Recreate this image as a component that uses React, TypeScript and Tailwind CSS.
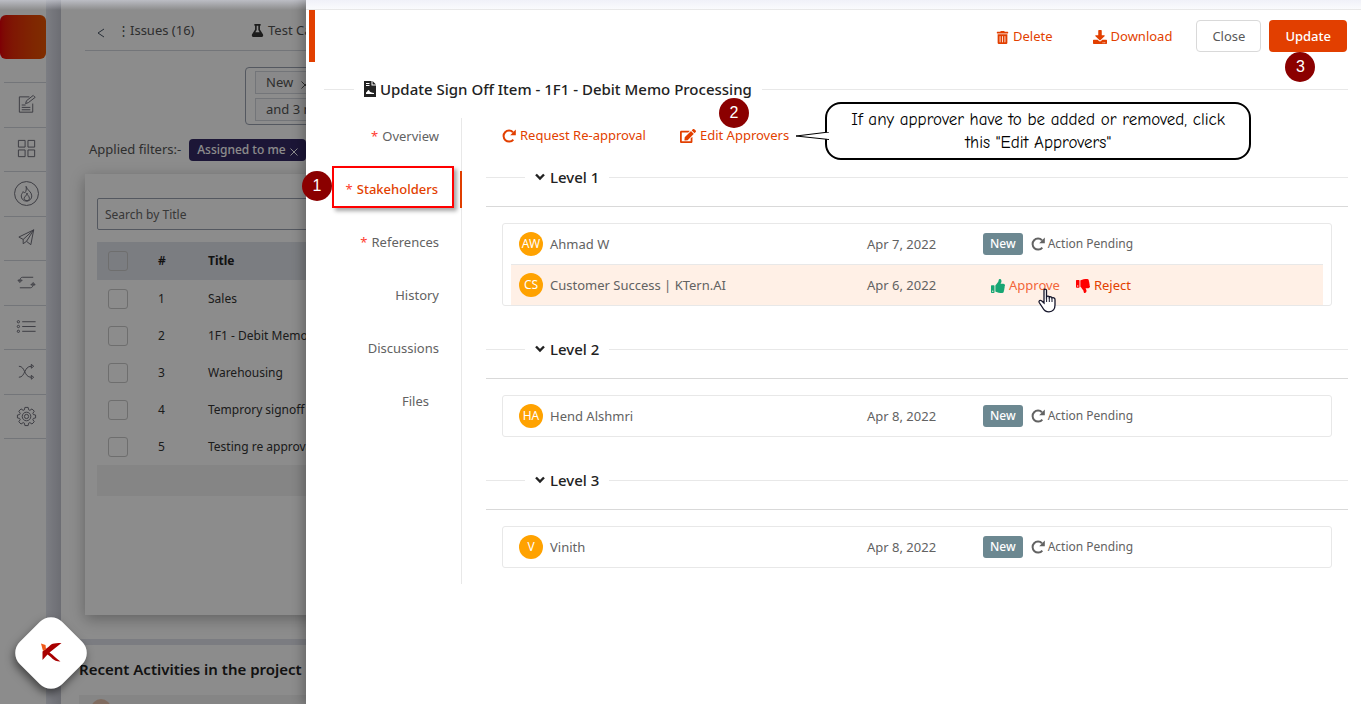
import React, { useState } from "react";
import {
  FaDownload,
  FaEdit,
  FaFlask,
  FaThumbsDown,
  FaThumbsUp,
  FaTrashAlt,
} from "react-icons/fa";

type Approver = {
  initials: string;
  name: string;
  date: string;
  canAct?: boolean;
};

type Level = {
  title: string;
  approvers: Approver[];
};

const levels: Level[] = [
  {
    title: "Level 1",
    approvers: [
      { initials: "AW", name: "Ahmad W", date: "Apr 7, 2022" },
      { initials: "CS", name: "Customer Success | KTern.AI", date: "Apr 6, 2022", canAct: true },
    ],
  },
  { title: "Level 2", approvers: [{ initials: "HA", name: "Hend Alshmri", date: "Apr 8, 2022" }] },
  { title: "Level 3", approvers: [{ initials: "V", name: "Vinith", date: "Apr 8, 2022" }] },
];

const tabs = [
  { label: "Overview", required: true },
  { label: "Stakeholders", required: true },
  { label: "References", required: true },
  { label: "History", required: false },
  { label: "Discussions", required: false },
  { label: "Files", required: false },
];

const signOffItems = [
  "Sales",
  "1F1 - Debit Memo Processing",
  "Warehousing",
  "Temprory signoff item",
  "Testing re approval flow",
];

const navItems = [
  {
    label: "Notes",
    icon: (
      <>
        <path d="M14 3H3.500v16h14V10" />
        <path d="M6 14h9M6 16.500h9M6 11.500h4" />
        <path d="m10 10 1-3 7-5.500 2 2-7 5.500z" />
      </>
    ),
  },
  {
    label: "Boards",
    icon: <path d="M2.500 2.500h7v7h-7zM12.500 2.500h7v7h-7zM2.500 12.500h7v7h-7zM12.500 12.500h7v7h-7z" />,
  },
  {
    label: "Activity",
    icon: (
      <>
        <circle cx="11" cy="11" r="12.500" />
        <path d="M10.500 3.500c1 4 6 5.500 6 10 0 3-2 5-5 5.500-4 0-6-2.500-6-5.500 0-2 1.500-3 2-4.500l1.500 1.500c2-2 2-4.500 1.500-7z" />
        <path d="M11.500 10.500c0 2.500 2.500 3 2.500 5.500 0 1.500-1 2.500-2.500 2.500S8.500 17.500 8.500 16c0-2 3-2.500 3-5.500z" />
      </>
    ),
  },
  {
    label: "Send",
    icon: <path d="M18.500 3 3 10.500l4.500 2.500L18.500 3l-3 15.500-4.500-3.500-3.500 2.500v-4.500M18.500 3 11 15" />,
  },
  {
    label: "Repeat",
    icon: (
      <>
        <path d="M18 5.500H7c-2 0-3 1.500-3 4.500M4 16.500h11c2 0 3-1.500 3-4.500" />
        <path d="m2 8.500 2 2.500 2.500-2.500zM15.500 13.500l2.500-2.500 2 2.500z" />
      </>
    ),
  },
  {
    label: "List",
    icon: (
      <>
        <path d="M6.500 6h14M6.500 11h14M6.500 16h14" />
        <circle cx="2.500" cy="6" r="1.200" />
        <circle cx="2.500" cy="11" r="1.200" />
        <circle cx="2.500" cy="16" r="1.200" />
      </>
    ),
  },
  {
    label: "Shuffle",
    icon: (
      <>
        <path d="M3 5.500c7 0 5 11.500 13 11.500M3 17c7 0 5-11.500 13-11.500" />
        <path d="m16 3.500 2.500 2-2.500 2zM16 15l2.500 2-2.500 2z" />
      </>
    ),
  },
  {
    label: "Settings",
    icon: (
      <>
        <path d="M9.300 2.500h3.400l.5 2.500 1.300.6 2.200-1.500 2.400 2.400-1.500 2.200.6 1.300 2.300.5v3l-2.300.5-.6 1.300 1.500 2.200-2.400 2.400-2.200-1.500-1.300.6-.5 2.500H9.300l-.5-2.500-1.300-.6-2.200 1.500-2.400-2.400 1.500-2.200-.6-1.300-2.300-.5v-3l2.300-.5.6-1.300-1.500-2.200 2.400-2.400 2.200 1.500 1.300-.6z" />
        <circle cx="11" cy="12" r="4.500" />
        <circle cx="11" cy="12" r="2.200" />
      </>
    ),
  },
];

const Sidebar: React.FC = () => (
  <nav className="w-[46px] shrink-0 bg-white pt-[15px]">
    <div className="h-11 rounded-md bg-linear-to-r from-[#e6000a] to-[#e85400]" />
    <ul className="mt-[23px] ml-1 flex h-[357px] flex-col border-t border-gray-300">
      {navItems.map((item) => (
        <li key={item.label} className="flex flex-1 border-b border-gray-300">
          <a href="#" aria-label={item.label} className="flex flex-1 items-center pl-3">
            <svg
              viewBox="0 0 23 23"
              className="size-[22px] overflow-visible fill-none stroke-[#6a6a76]"
            >
              {item.icon}
            </svg>
          </a>
        </li>
      ))}
    </ul>
  </nav>
);

const CloseMark: React.FC = () => (
  <svg viewBox="0 0 8 8" className="mt-1 size-2 fill-none stroke-current">
    <path d="m.5.5 7 7M7.500.5l-7 7" />
  </svg>
);

const SignOffPage: React.FC = () => (
  <main className="flex min-w-0 flex-1 flex-col overflow-hidden text-[13px] whitespace-nowrap text-[#555]">
    <section className="h-[639px] shrink-0 bg-white pl-6">
      <div className="flex h-[51px] items-center border-b border-gray-300 pt-[11px]">
        <button className="w-8 text-center text-gray-600" aria-label="Back">
          <svg viewBox="0 0 8 10" className="mx-auto mt-1 h-[10px] w-2 fill-none stroke-current">
            <path d="M7 1 1 5l6 4" />
          </svg>
        </button>
        <a href="#" className="w-[134px]">⋮Issues (16)</a>
        <a href="#" className="flex items-center gap-1">
          <FaFlask className="size-[13px] text-[#333]" />
          Test Cases
        </a>
      </div>

      <div className="mt-4 ml-40 flex h-[58px] w-80 flex-col gap-1 rounded border border-gray-400 px-[9px] py-[3px]">
        <span className="flex h-6 w-24 items-center gap-2 border border-gray-300 bg-gray-50 px-[10px]">
          New <CloseMark />
        </span>
        <span className="flex h-6 w-24 items-center border border-gray-300 bg-gray-50 px-[10px]">
          and 3 more
        </span>
      </div>

      <div className="mt-[14px] flex items-center gap-2 pl-1">
        Applied filters:-
        <button className="flex h-[22px] items-center gap-1 rounded bg-[#332864] px-2 text-xs font-medium text-white">
          Assigned to me <CloseMark />
        </button>
      </div>

      <div className="mt-[13px] h-[441px] bg-white px-3 pt-6 shadow-[0_4px_14px_rgba(0,0,0,0.3)]">
        <input
          type="text"
          aria-label="Search by Title"
          placeholder="Search by Title"
          className="h-8 w-full rounded-xs border border-gray-400 px-[7px] text-xs placeholder:text-[#666]"
        />
        <table className="mt-3 w-full table-fixed text-left text-xs text-[#333]">
          <thead>
            <tr className="h-[38px] bg-[#e1e3eb] text-[#222]">
              <th className="w-12 pl-[11px]">
                <input type="checkbox" aria-label="Select all" className="block size-5 appearance-none rounded-[3px] border border-[#c8c8c8]" />
              </th>
              <th className="w-[63px] pl-[13px] font-semibold">#</th>
              <th className="font-bold">Title</th>
            </tr>
          </thead>
          <tbody>
            {signOffItems.map((item, index) => (
              <tr key={item} className="h-[37px]">
                <td className="pl-[11px]">
                  <input type="checkbox" aria-label={item} className="block size-5 appearance-none rounded-[3px] border border-[#c8c8c8]" />
                </td>
                <td className="pl-[13px]">{index + 1}</td>
                <td>{item}</td>
              </tr>
            ))}
          </tbody>
          <tfoot>
            <tr className="h-[31px] bg-[#f3f3f3]">
              <td colSpan={3} />
            </tr>
          </tfoot>
        </table>
      </div>
    </section>

    <section className="mt-[6px] flex-1 bg-white pl-[18px]">
      <h2 className="pt-3 text-[15px] leading-6 font-semibold text-[#222]">
        Recent Activities in the project
      </h2>
      <div className="mt-[14px] h-16 bg-[#f3f3f3] pt-1 pl-3">
        <div className="size-5 rounded-full bg-[#e8c4ae]" />
      </div>
    </section>
  </main>
);

const StepBadge: React.FC<{ step: number; className: string }> = ({ step, className }) => (
  <span
    className={`absolute z-10 flex size-[30px] items-center justify-center rounded-full bg-[#8b0000] font-['Liberation_Sans',sans-serif] text-base font-normal text-white ${className}`}
  >
    {step}
  </span>
);

const HandCursor: React.FC = () => (
  <svg viewBox="0 0 20 25" className="pointer-events-none absolute top-3 left-[46px] z-10 h-[25px] w-5">
    <path
      d="M7 2.200c0-1.500 2.300-1.500 2.500 0V9c.7-1.200 2.600-1 2.800.4.700-1 2.600-.8 2.700.7.800-.8 3-.4 3 1.400v5.500c0 4-2 6.800-6 6.800-3.500 0-5-1.300-6.200-3.800l-3.600-5.500c-.8-1.800 1-2.800 2.300-1.700L7 15z"
      fill="white"
      stroke="#15152a"
      strokeWidth="1.300"
    />
    <path d="M9.600 9v5M12.300 9.500V14M15 10.500V14" fill="none" stroke="#15152a" />
  </svg>
);

const RedoIcon: React.FC = () => (
  <svg viewBox="0 0 14 14" className="size-[14px]">
    <path d="M11.300 10.600A5.500 5.500 0 1 1 11 3.200" fill="none" stroke="currentColor" strokeWidth="2" />
    <path d="M13.800.6v5.600H8.200z" fill="currentColor" />
  </svg>
);

const SignOffFileIcon: React.FC = () => (
  <svg viewBox="0 0 12 16" className="h-4 w-3">
    <path d="M0 0h7.500v4.500H12V16H0z" fill="#222" />
    <path d="M8.500 0 12 3.500H8.500z" fill="#222" />
    <path d="M2 2.500h3.500M2 4.500h3.500" stroke="white" />
    <path d="M2 13v-1.500c1 0 1.500-2.500 2.500-2.500s1 2 2 2 1 1 3.500 1v1z" fill="white" />
  </svg>
);

const ApproverRow: React.FC<{ approver: Approver }> = ({ approver }) => (
  <li
    className={`box-content grid h-10 grid-cols-[348fr_116fr_332fr] items-center px-2 ${
      approver.canAct ? "bg-[#fff0e6]" : ""
    }`}
  >
    <div className="flex items-center gap-[7px]">
      <span className="flex size-6 items-center justify-center rounded-full bg-[#ffa200] text-xs text-white">
        {approver.initials}
      </span>
      <span className="pt-px">{approver.name}</span>
    </div>
    <span className="pt-px">{approver.date}</span>
    {approver.canAct ? (
      <div className="flex items-center gap-4 pt-px pl-2 text-[#e23f00]">
        <button className="relative flex items-center gap-1 text-[#f2663a]">
          <FaThumbsUp className="size-[14px] text-[#17a673]" />
          Approve
          <HandCursor />
        </button>
        <button className="flex items-center gap-1">
          <FaThumbsDown className="size-[14px] text-[#ff0000]" />
          Reject
        </button>
      </div>
    ) : (
      <div className="flex items-center gap-2 text-xs">
        <span className="rounded-[3px] bg-[#6c8891] px-[7px] leading-[22px] font-medium text-white">New</span>
        <span className="flex items-center gap-[3px]">
          <RedoIcon />
          Action Pending
        </span>
      </div>
    )}
  </li>
);

const LevelSection: React.FC<{ level: Level }> = ({ level }) => {
  const [open, setOpen] = useState(true);

  return (
    <section>
      <h3 className="mb-[17px] flex h-6 items-center">
        <span className="w-[39px] border-t border-[#e8e8e8]" />
        <button
          onClick={() => setOpen(!open)}
          className="mx-[10px] flex items-center gap-[5px] text-[15px] font-medium text-[#222]"
        >
          <svg viewBox="0 0 10 8" className="h-2 w-[10px] fill-none stroke-current">
            <path d="m1 1.500 4 4 4-4" strokeWidth="2.400" />
          </svg>
          {level.title}
        </button>
        <span className="flex-1 border-t border-[#e8e8e8]" />
      </h3>
      <div className="border-t border-[#d9d9d9] px-4 pt-4">
        {open && (
          <ul className="divide-y divide-[#e8e8e8] rounded-[3px] border border-[#e8e8e8] px-2">
            {level.approvers.map((approver) => (
              <ApproverRow key={approver.name} approver={approver} />
            ))}
          </ul>
        )}
      </div>
    </section>
  );
};

const Callout: React.FC = () => (
  <div className="absolute -top-6 left-full ml-9 w-[426px] rounded-2xl border-2 border-black bg-white px-5 py-1 text-center font-['Comic_Sans_MS','Comic_Neue','Noto_Sans',sans-serif] text-[17px] leading-[23px] text-black">
    If any approver have to be added or removed, click this "Edit Approvers"
    <svg viewBox="0 0 34 8" className="absolute top-7 -left-8 h-2 w-[34px]">
      <path d="M34 0 1 4l33 3.500" fill="white" stroke="black" strokeWidth="1" />
      <path d="M33 1v5.500" stroke="white" strokeWidth="2" />
    </svg>
  </div>
);

const SignOffDrawer: React.FC = () => {
  const [activeTab, setActiveTab] = useState("Stakeholders");

  return (
    <aside className="absolute inset-y-0 right-0 left-[306px] bg-white text-[13px] text-[#626262] shadow-[-4px_0_10px_rgba(0,0,0,0.25)]">
      <div className="h-[10px] border-b border-[#e8e8e8] bg-linear-to-b from-[#f0f1f8] to-[#fafbfd]" />
      <header className="ml-[3px] flex h-[52px] items-center justify-end border-l-6 border-[#e23f00] pr-[14px] text-[#e23f00]">
        <button className="mr-10 flex items-center gap-1 pt-[2px]">
          <FaTrashAlt className="size-[13px]" />
          Delete
        </button>
        <button className="mr-6 flex items-center gap-1 pt-[2px]">
          <FaDownload className="size-[14px]" />
          Download
        </button>
        <button className="mr-2 h-8 rounded border border-[#d9d9d9] px-[15px] pt-[2px] text-[#595959]">Close</button>
        <div className="relative">
          <button className="h-8 rounded bg-[#e23f00] px-4 pt-[2px] font-medium text-white">Update</button>
          <StepBadge step={3} className="top-8 left-4" />
        </div>
      </header>

      <h1 className="mt-[15px] flex h-6 items-center pr-[13px] pl-[18px] text-[15px] font-medium text-[#222]">
        <span className="w-[30px] border-t border-[#e8e8e8]" />
        <span className="mx-[10px] flex items-center gap-1">
          <SignOffFileIcon />
          Update Sign Off Item - 1F1 - Debit Memo Processing
        </span>
        <span className="flex-1 border-t border-[#e8e8e8]" />
      </h1>

      <div className="mt-[17px] flex">
        <div
          role="tablist"
          className="flex h-[466px] w-[156px] shrink-0 flex-col gap-4 border-r border-[#e8e8e8]"
        >
          {tabs.map((tab) => {
            const isActive = tab.label === activeTab;
            return (
              <button
                key={tab.label}
                role="tab"
                aria-selected={isActive}
                onClick={() => setActiveTab(tab.label)}
                className={`relative flex h-[37px] items-center justify-end gap-1 pt-px ${
                  tab.label === "Files" ? "pr-8" : "pr-[22px]"
                } ${isActive ? "-mr-px border-r-2 border-[#e23f00] font-medium text-[#e23f00]" : ""}`}
              >
                {tab.required && <span className="font-normal text-[#ff3b30]">*</span>}
                {tab.label}
                {isActive && (
                  <>
                    <span className="absolute -top-[5px] right-[6px] h-[42px] w-[122px] border-2 border-[#ff0000] shadow-[3px_3px_4px_rgba(0,0,0,0.35)]" />
                    <StepBadge step={1} className="top-0 right-[128px]" />
                  </>
                )}
              </button>
            );
          })}
        </div>

        <div className="min-w-0 flex-1 pr-[13px] pl-6">
          <div className="flex h-9 items-center gap-[34px] pl-4 text-[#e23f00]">
            <button className="flex items-center gap-1">
              <RedoIcon />
              Request Re-approval
            </button>
            <div className="relative">
              <button className="flex items-center gap-1">
                <FaEdit className="size-4" />
                Edit Approvers
              </button>
              <StepBadge step={2} className="-top-7 left-[39px]" />
              <Callout />
            </div>
          </div>
          <div className="mt-[11px] flex flex-col gap-[31px]">
            {levels.map((level) => (
              <LevelSection key={level.title} level={level} />
            ))}
          </div>
        </div>
      </div>
    </aside>
  );
};

export default function App() {
  return (
    <div className="relative flex h-screen overflow-hidden bg-[#e0e2ec] font-['Noto_Sans',sans-serif]">
      <Sidebar />
      <div className="w-[15px] shrink-0 bg-linear-to-r from-[#e2e4ee] to-[#c6c8d2]" />
      <SignOffPage />

      <div className="absolute inset-0 bg-black/45" />
      <div className="absolute inset-x-0 top-0 h-[10px] bg-linear-to-b from-[#d0d2dc]/70 to-transparent" />

      <SignOffDrawer />

      <button
        aria-label="KTern menu"
        className="absolute bottom-[21px] left-[21px] size-[60px] rotate-45 rounded-2xl bg-white shadow-[2px_4px_8px_rgba(0,0,0,0.5)]"
      >
        <svg viewBox="0 0 22 22" className="mx-auto size-[22px] -rotate-45">
          <path d="M9 4.500C11 2 13 1 21.500 1L9.500 10.500c4 2.500 6 5.500 11 9-8 0-9-5-13-7L2.500 18V9.500z" fill="#a80000" />
          <path d="M1 1.500 5.500 3 6 7 3 9z" fill="#f05a1a" />
        </svg>
      </button>
    </div>
  );
}
